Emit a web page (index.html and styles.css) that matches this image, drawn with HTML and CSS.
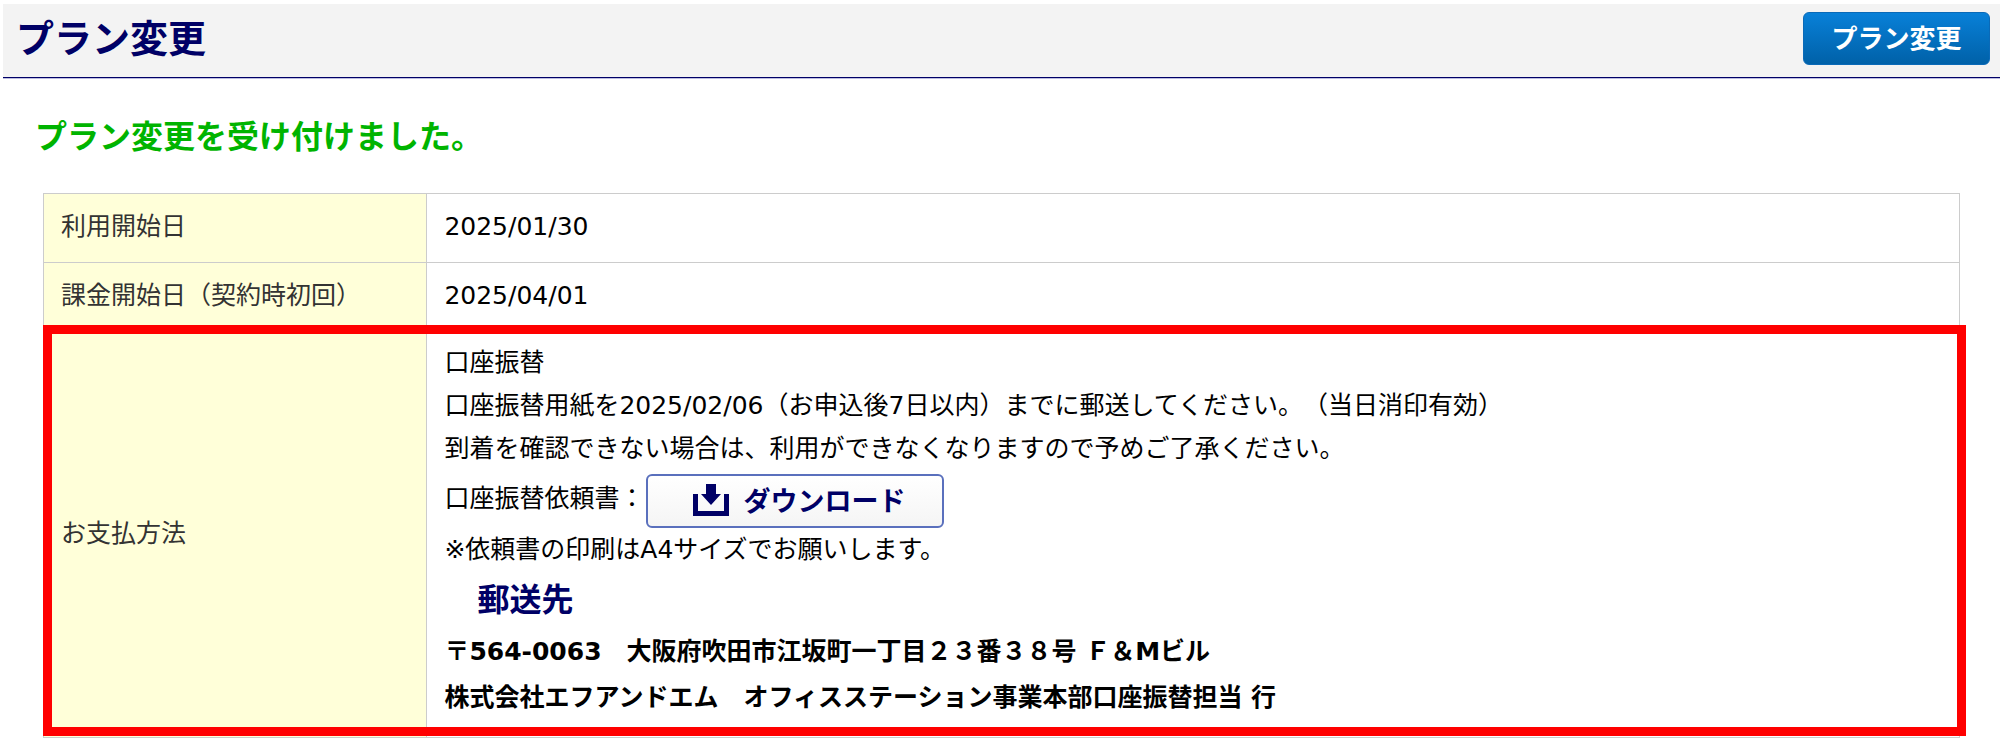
FILE: index.html
```html
<!DOCTYPE html>
<html lang="ja">
<head>
<meta charset="utf-8">
<meta name="viewport" content="width=device-width, initial-scale=1">
<title>プラン変更</title>
<link rel="stylesheet" href="styles.css">
</head>
<body>
<header class="page-header">
  <h1 class="page-title">プラン変更</h1>
  <button type="button" class="btn-primary">プラン変更</button>
</header>
<main class="content">
  <p class="message">プラン変更を受け付けました。</p>
  <table class="plan">
    <tbody>
      <tr>
        <th scope="row">利用開始日</th>
        <td>2025/01/30</td>
      </tr>
      <tr>
        <th scope="row">課金開始日（契約時初回）</th>
        <td>2025/04/01</td>
      </tr>
      <tr class="highlight">
        <th scope="row">お支払方法</th>
        <td>
          <p class="line">口座振替</p>
          <p class="line">口座振替用紙を2025/02/06（お申込後7日以内）までに郵送してください。（当日消印有効）</p>
          <p class="line">到着を確認できない場合は、利用ができなくなりますので予めご了承ください。</p>
          <div class="download-row">
            <span>口座振替依頼書：</span>
            <button type="button" class="btn-download">
              <svg class="icon" viewBox="0 0 36 32" aria-hidden="true"><path d="M0 10h5v17h26V10h5v22H0z"/><path d="M13 0h10v10h5L18 21 8 10h5z"/></svg>
              ダウンロード
            </button>
          </div>
          <p class="line">※依頼書の印刷はA4サイズでお願いします。</p>
          <h2 class="sub-title">郵送先</h2>
          <address class="address">〒564-0063　大阪府吹田市江坂町一丁目２３番３８号 Ｆ＆Mビル<br>株式会社エフアンドエム　オフィスステーション事業本部口座振替担当 行</address>
        </td>
      </tr>
    </tbody>
  </table>
</main>
</body>
</html>
```

FILE: styles.css
```css
* {
  box-sizing: border-box;
}

body {
  margin: 0;
  padding: 4px 0 0 3px;
  background: #fff;
  color: #000;
  font-family: "DejaVu Sans", "Noto Sans CJK JP", sans-serif;
  font-size: 25px;
  line-height: 44px;
  text-spacing-trim: space-all;
}

h1, h2, p {
  margin: 0;
}

.page-header {
  display: flex;
  justify-content: space-between;
  align-items: flex-start;
  height: 74px;
  padding: 8px 10px 0 13px;
  background: #f3f3f3;
  border-bottom: 1px solid #000066;
  box-shadow: 0 1px #bcbce0;
}

.page-title {
  color: #000066;
  font-family: "Noto Sans CJK JP", sans-serif;
  font-size: 38px;
  line-height: 48px;
}

.btn-primary {
  width: 187px;
  height: 53px;
  padding: 0 0 4px;
  border: 1px solid #0a6ab8;
  border-radius: 6px;
  background: linear-gradient(#0880d8, #0061a8);
  color: #fff;
  font: bold 26px/46px "Noto Sans CJK JP", sans-serif;
}

.content {
  padding: 31px 39px 12px 40px;
}

.message {
  margin: 0 -8px 33px;
  color: #00b400;
  font-family: "Noto Sans CJK JP", sans-serif;
  font-size: 32px;
  font-weight: bold;
  line-height: 51px;
}

.plan {
  width: 100%;
  border-collapse: collapse;
}

.plan th,
.plan td {
  padding: 11px 17px 13px;
  border: 1px solid #ccc;
  text-align: left;
  vertical-align: middle;
}

.plan th {
  width: 20%;
  background: #ffffd9;
  color: #333;
  font-weight: normal;
}

.highlight {
  position: relative;
}

/* Red frame laid over the row that needs attention */
.highlight::after {
  content: "";
  position: absolute;
  inset: -7px -5px 2px -1px;
  border: 9px solid #f00;
  pointer-events: none;
}

.plan .highlight td {
  padding: 9px 17px 16px;
}

.line {
  line-height: 43px;
}

.download-row {
  display: flex;
  align-items: center;
  gap: 2px;
  margin-top: 4px;
  line-height: 46px;
}

.download-row span {
  padding-bottom: 4px;
}

.btn-download {
  display: flex;
  align-items: center;
  gap: 14px;
  width: 298px;
  height: 54px;
  padding: 0 0 2px 45px;
  border: 2px solid #5a70bd;
  border-radius: 6px;
  background: linear-gradient(#fff, #f5f5f5);
  color: #000066;
  font: bold 27px/48px "Noto Sans CJK JP", sans-serif;
}

.icon {
  width: 36px;
  height: 32px;
  fill: #000066;
}

.sub-title {
  padding-left: 33px;
  color: #000066;
  font-family: "Noto Sans CJK JP", sans-serif;
  font-size: 32px;
  line-height: 52px;
}

.address {
  margin-top: 6px;
  font-style: normal;
  font-weight: bold;
  line-height: 46px;
}
```
